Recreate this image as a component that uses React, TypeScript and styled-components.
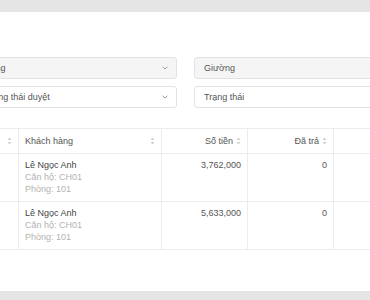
import styled, { createGlobalStyle } from "styled-components";

const GlobalStyle = createGlobalStyle`
   html, body {
      margin: 0;
      padding: 0;
      background: #e5e5e5;
      overflow: hidden;
      font-family: "Liberation Sans", Arial, sans-serif;
   }
`;

type Row = { name: string; apartment: string; room: string; amount: string; paid: string };

const rows: Row[] = [
   { name: "Lê Ngọc Anh", apartment: "CH01", room: "101", amount: "3,762,000", paid: "0" },
   { name: "Lê Ngọc Anh", apartment: "CH01", room: "101", amount: "5,633,000", paid: "0" },
];

function SortIcon() {
   return (
      <svg width="5" height="8" viewBox="0 0 5 8">
         <path d="M2.5 0.5 L4.5 3 L0.5 3 Z" fill="#d0d0d0" />
         <path d="M2.5 7.5 L4.5 5 L0.5 5 Z" fill="#d0d0d0" />
      </svg>
   );
}

function Chevron() {
   return (
      <svg width="6" height="4" viewBox="0 0 6 4">
         <path d="M0.6 0.8 L3 3 L5.4 0.8" fill="none" stroke="#999" strokeWidth="1" />
      </svg>
   );
}

export default function App() {
   return (
      <>
         <GlobalStyle />
         <Card>
            <Filters>
               <Select $disabled>
                  <span>Tầng</span>
                  <Chevron />
               </Select>
               <Select $disabled>
                  <span>Giường</span>
               </Select>
               <Select>
                  <span>Trạng thái duyệt</span>
                  <Chevron />
               </Select>
               <Select>
                  <span>Trạng thái</span>
               </Select>
            </Filters>

            <Table>
               <colgroup>
                  <col style={{ width: 218 }} />
                  <col style={{ width: 143 }} />
                  <col style={{ width: 86 }} />
                  <col style={{ width: 86 }} />
                  <col />
               </colgroup>
               <thead>
                  <tr>
                     <Th><HeadCell><span>Mã hóa đơn</span><SortIcon /></HeadCell></Th>
                     <Th><HeadCell><span>Khách hàng</span><SortIcon /></HeadCell></Th>
                     <Th><HeadCell $right><span>Số tiền</span><SortIcon /></HeadCell></Th>
                     <Th><HeadCell $right><span>Đã trả</span><SortIcon /></HeadCell></Th>
                     <Th></Th>
                  </tr>
               </thead>
               <tbody>
                  {rows.map((r, i) => (
                     <tr key={i}>
                        <Td></Td>
                        <Td>
                           <Name>{r.name}</Name>
                           <Sub>Căn hộ: {r.apartment}</Sub>
                           <Sub>Phòng: {r.room}</Sub>
                        </Td>
                        <Td $right>{r.amount}</Td>
                        <Td $right>{r.paid}</Td>
                        <Td></Td>
                     </tr>
                  ))}
               </tbody>
            </Table>
         </Card>
      </>
   );
}

const Card = styled.div`
   margin-top: 12px;
   height: 279px;
   padding-top: 45px;
   box-sizing: border-box;
   background: #fff;
   overflow: hidden;
`;

const Filters = styled.div`
   margin-left: -25px;
   width: 800px;
   display: grid;
   grid-template-columns: 202px 377px;
   column-gap: 17px;
   row-gap: 7px;
`;

const Select = styled.div<{ $disabled?: boolean }>`
   height: 22px;
   box-sizing: border-box;
   display: flex;
   align-items: center;
   justify-content: space-between;
   padding: 0 8px 0 9px;
   border: 1px solid #e2e2e2;
   border-radius: 3px;
   background: ${({ $disabled }) => ($disabled ? "#f5f5f5" : "#fff")};
   color: #555;
   font-size: 9px;
`;

const Table = styled.table`
   margin-top: 20px;
   margin-left: -200px;
   width: 800px;
   border-collapse: collapse;
   table-layout: fixed;
   font-size: 9px;
   color: #333;
`;

const Th = styled.th`
   border: 1px solid #ececf0;
   padding: 6px;
   height: 24px;
   box-sizing: border-box;
   font-weight: normal;
   color: #555;
   text-align: left;
`;

const HeadCell = styled.div<{ $right?: boolean }>`
   display: flex;
   align-items: center;
   justify-content: ${({ $right }) => ($right ? "flex-end" : "space-between")};
   gap: 3px;
   line-height: 12px;
   white-space: nowrap;
`;

const Td = styled.td<{ $right?: boolean }>`
   border: 1px solid #ececf0;
   padding: 5px 6px 6px;
   vertical-align: top;
   line-height: 12px;
   text-align: ${({ $right }) => ($right ? "right" : "left")};
   color: #555;
`;

const Name = styled.div`
   color: #444;
`;

const Sub = styled.div`
   color: #b3b3b3;
`;
